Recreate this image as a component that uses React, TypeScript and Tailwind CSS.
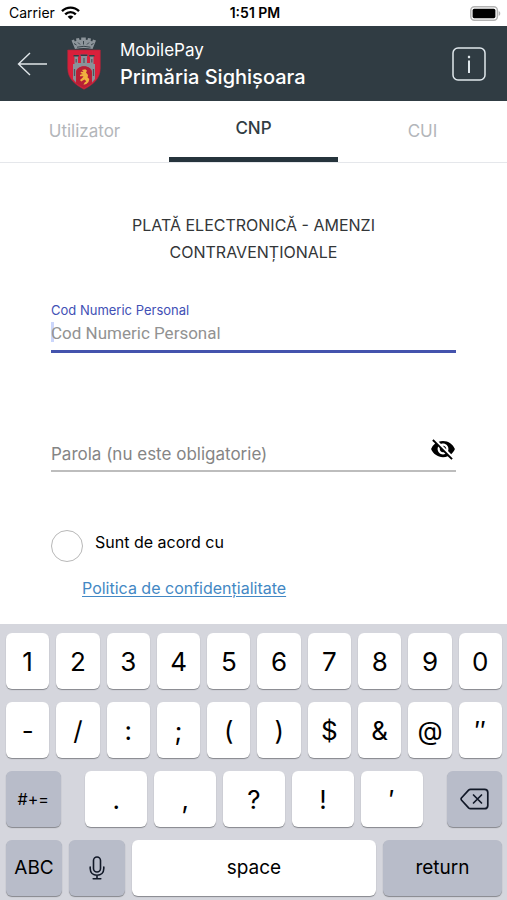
import React, { useState } from "react";
import { MdVisibilityOff } from "react-icons/md";

const DIGITS = ["1", "2", "3", "4", "5", "6", "7", "8", "9", "0"];
const SYMBOLS = ["-", "/", ":", ";", "(", ")", "$", "&", "@", "″"];
const PUNCTUATION = [".", ",", "?", "!", "′"];
const TABS = ["Utilizator", "CNP", "CUI"];

function WifiIcon() {
  return (
    <svg width="19" height="14" viewBox="0 0 19 14" fill="none" stroke="black" strokeWidth="2.4" aria-hidden="true">
      <path d="M1 5.2C5.8 0.4 13.2 0.4 18 5.2" />
      <path d="M4.2 8.4C7.2 5.4 11.8 5.4 14.8 8.4" />
      <path d="M9.5 13.6L6.6 10.7C8.2 9.2 10.8 9.2 12.4 10.7Z" fill="black" stroke="none" />
    </svg>
  );
}

function BatteryIcon() {
  return (
    <svg width="31" height="15" viewBox="0 0 31 15" aria-hidden="true">
      <rect x="0.8" y="0.8" width="26.6" height="13.4" rx="3.6" fill="white" stroke="#b3b3b3" strokeWidth="1.5" />
      <rect x="2.6" y="2.8" width="22.8" height="9.4" rx="1.6" fill="black" />
      <path d="M28.7 5C30.8 5.8 30.8 9.2 28.7 10Z" fill="#b3b3b3" />
    </svg>
  );
}

function CoatOfArms() {
  return (
    <svg width="34" height="53" viewBox="0 0 34 53" aria-hidden="true">
      {/* Mural crown */}
      <path
        d="M8 12L4.5 3.5L7 2.6L7.8 4.4L9.4 3.8L9 1.6L12 1L12.6 3L14.2 2.8V0.5H18.8V2.8L20.4 3L21 1L24 1.6L23.6 3.8L25.2 4.4L26 2.6L29 3.5L25.5 12Q17 9.8 8 12Z"
        fill="#8d959b"
      />
      <path d="M7 6.5L9.5 8M11 5.5L13 7.5M16.5 4V7.5M20 7.5L22 5.5M24 8L26.5 6.5M10 10.2Q17 8.4 23.5 10.2" stroke="#39444b" strokeWidth="1" fill="none" />
      {/* Shield */}
      <path d="M0.7 13H33.3V31C33.3 42 26 47.5 17 52.3C8 47.5 0.7 42 0.7 31Z" fill="#d9203b" stroke="#a9283b" strokeWidth="0.6" />
      {/* Castle */}
      <path
        d="M6 27H7.5V20L6.5 18.5H12L11 20V26H14V19.5L13 17.8H21L20 19.5V26H23V20L22 18.5H27.5L26.5 20V27H28V42L25 45.5V35C25 27.5 9 27.5 9 35V45.5L6 42Z"
        fill="#8b9299"
      />
      <path d="M6.5 18.8H11.8M13.5 18.2H20.5M22.2 18.8H27.5" stroke="#303b43" strokeWidth="1.6" />
      <path d="M9.2 22V25.5M17 21V26M24.8 22V25.5M7.5 32V39M26.5 32V39" stroke="#4b555c" strokeWidth="1.2" />
      <path d="M9.2 46.5V36C9.2 27 24.8 27 24.8 36V46.5L17 51Z" fill="#b71f35" />
      {/* Lion */}
      <path
        d="M15 33L18.3 32.2L20 33.7L19 35.6L21 38L20.6 40.5L22.3 42L21.5 45L19.3 47L16.5 47.8L17.5 45.8L19.3 44.2L17.5 42.6L14.2 44.5L13 43L15.5 40.8L16.5 39.2L13 39.2V37.8L15.8 37L13.5 36L14 34.8L16.5 35Z"
        fill="#f0b23f"
      />
    </svg>
  );
}

function MicIcon() {
  return (
    <svg width="16" height="24" viewBox="0 0 16 24" fill="none" stroke="#111827" strokeWidth="1.6" strokeLinecap="round" aria-hidden="true">
      <rect x="4.5" y="1" width="7" height="15" rx="3.5" />
      <path d="M1.2 11V12.5C1.2 16.5 4 19.2 8 19.2S14.8 16.5 14.8 12.5V11M8 19.2V22.6M4.2 22.8H11.8" />
    </svg>
  );
}

function DeleteIcon() {
  return (
    <svg width="29" height="22" viewBox="0 0 29 22" fill="none" stroke="#111827" strokeWidth="1.7" strokeLinecap="round" strokeLinejoin="round" aria-hidden="true">
      <path d="M10.5 1.3H24.5Q27.8 1.3 27.8 4.6V17.4Q27.8 20.7 24.5 20.7H10.5Q9.4 20.7 8.6 19.9L1.6 12.2Q0.6 11 1.6 9.8L8.6 2.1Q9.4 1.3 10.5 1.3Z" />
      <path d="M13.5 7L21.5 15M21.5 7L13.5 15" />
    </svg>
  );
}

interface KeyProps {
  children: React.ReactNode;
  label?: string;
  dark?: boolean;
  className?: string;
}

function Key({ children, label, dark = false, className = "" }: KeyProps) {
  return (
    <button
      type="button"
      aria-label={label}
      className={`flex h-14 items-center justify-center rounded-md shadow-[0_1px_1px_#85878c] ${
        dark ? "bg-[#b8bcc9]" : "bg-white"
      } ${className}`}
    >
      {children}
    </button>
  );
}

function Keyboard() {
  return (
    <div className="flex flex-col gap-[13px] bg-[#d5d6dd] pt-[9px] pr-[5px] pb-1 pl-[6px] font-['Inter',sans-serif] text-black">
      <div className="flex gap-[7px]">
        {DIGITS.map((k) => (
          <Key key={k} className="min-w-0 flex-1 text-[26px]">{k}</Key>
        ))}
      </div>
      <div className="flex gap-[7px]">
        {SYMBOLS.map((k) => (
          <Key key={k} className="min-w-0 flex-1 text-[26px]">{k}</Key>
        ))}
      </div>
      <div className="flex justify-between">
        <Key dark className="w-[11%] text-base">#+=</Key>
        <div className="flex w-[68%] gap-[7px]">
          {PUNCTUATION.map((k) => (
            <Key key={k} className="min-w-0 flex-1 text-[26px]">{k}</Key>
          ))}
        </div>
        <Key dark label="Delete" className="w-[11%]">
          <DeleteIcon />
        </Key>
      </div>
      <div className="flex gap-[7px]">
        <Key dark className="w-14 text-[19px]">ABC</Key>
        <Key dark label="Dictation" className="w-14">
          <MicIcon />
        </Key>
        <Key className="flex-1 text-[19px]">space</Key>
        <Key dark className="w-[24%] text-[19px]">return</Key>
      </div>
    </div>
  );
}

export default function App() {
  const [activeTab, setActiveTab] = useState("CNP");
  const [cnp, setCnp] = useState("");
  const [password, setPassword] = useState("");
  const [showPassword, setShowPassword] = useState(false);

  return (
    <div className="flex min-h-screen flex-col bg-white font-['Inter',sans-serif]">
      {/* Status bar */}
      <div className="grid h-[26px] grid-cols-3 items-center pr-[6px] pl-[9px] text-sm text-black">
        <div className="flex items-center gap-[6px]">
          <span>Carrier</span>
          <WifiIcon />
        </div>
        <span className="text-center font-semibold">1:51 PM</span>
        <div className="flex justify-end">
          <BatteryIcon />
        </div>
      </div>

      <header className="flex h-[75px] items-center bg-[#303c43] pr-[21px] pl-[17px] text-white">
        <button type="button" aria-label="Înapoi">
          <svg width="31" height="24" viewBox="0 0 31 24" fill="none" stroke="#dfe5e8" strokeWidth="1.4">
            <path d="M30 12H1.5M13 1L1.5 12L13 23" />
          </svg>
        </button>
        <div className="ml-[19px]">
          <CoatOfArms />
        </div>
        <div className="ml-[19px] flex-1 leading-[27px]">
          <p className="text-[17px]">MobilePay</p>
          <h1 className="text-[20px] font-medium">Primăria Sighișoara</h1>
        </div>
        <button type="button" aria-label="Informații">
          <svg width="34" height="34" viewBox="0 0 34 34" fill="none" stroke="#dfe7ec" strokeWidth="1.5">
            <rect x="1" y="1" width="32" height="32" rx="5" />
            <path d="M17 13.5V26" strokeWidth="2" />
            <path d="M17 8.8V11.2" strokeWidth="2.2" />
          </svg>
        </button>
      </header>

      <nav className="grid h-[62px] grid-cols-3 border-b border-gray-200">
        {TABS.map((tab) => (
          <button
            key={tab}
            type="button"
            onClick={() => setActiveTab(tab)}
            className={
              tab === activeTab
                ? "border-b-[5px] border-[#26343c] text-[17px] font-medium text-[#303c43]"
                : "text-[17px] text-[#b3b6ba]"
            }
          >
            {tab}
          </button>
        ))}
      </nav>

      <main className="flex-1 px-[51px] pt-[49px] pb-5">
        <h2 className="px-16 text-center text-base leading-[27px] text-[#333638]">
          PLATĂ ELECTRONICĂ - AMENZI CONTRAVENȚIONALE
        </h2>

        <div className="relative mt-[34px] border-b-[3px] border-[#4453ad]">
          <label htmlFor="cnp" className="block text-[13px] leading-5 text-[#4150b5]">
            Cod Numeric Personal
          </label>
          <span className="absolute bottom-2 left-0 h-5 w-[3px] bg-[#cbd6fb]" />
          <input
            id="cnp"
            inputMode="numeric"
            value={cnp}
            onChange={(e) => setCnp(e.target.value)}
            placeholder="Cod Numeric Personal"
            className="relative block h-[30px] w-full bg-transparent pb-1 font-['Roboto',sans-serif] text-[17px] outline-none placeholder:text-[#929292]"
          />
        </div>

        <div className="mt-[83px] flex h-9 items-start justify-between border-b-2 border-[#bdbdbd]">
          <input
            id="password"
            aria-label="Parola (nu este obligatorie)"
            type={showPassword ? "text" : "password"}
            value={password}
            onChange={(e) => setPassword(e.target.value)}
            placeholder="Parola (nu este obligatorie)"
            className="h-9 min-w-0 flex-1 bg-transparent text-[17px] outline-none placeholder:text-[#858585]"
          />
          <button type="button" aria-label="Arată parola" onClick={() => setShowPassword(!showPassword)}>
            <MdVisibilityOff size={26} className="text-black" />
          </button>
        </div>

        <div className="mt-[58px] flex items-start gap-3">
          <input
            id="agree"
            type="checkbox"
            className="size-8 appearance-none rounded-full border border-[#b8b8b8] checked:border-[#4453ad] checked:bg-[#4453ad]"
          />
          <label htmlFor="agree" className="text-base text-black">
            Sunt de acord cu
          </label>
        </div>
        <a href="#politica" className="mt-[14px] ml-[31px] inline-block text-base text-[#4388c4] underline underline-offset-2">
          Politica de confidențialitate
        </a>
      </main>

      <Keyboard />
    </div>
  );
}
